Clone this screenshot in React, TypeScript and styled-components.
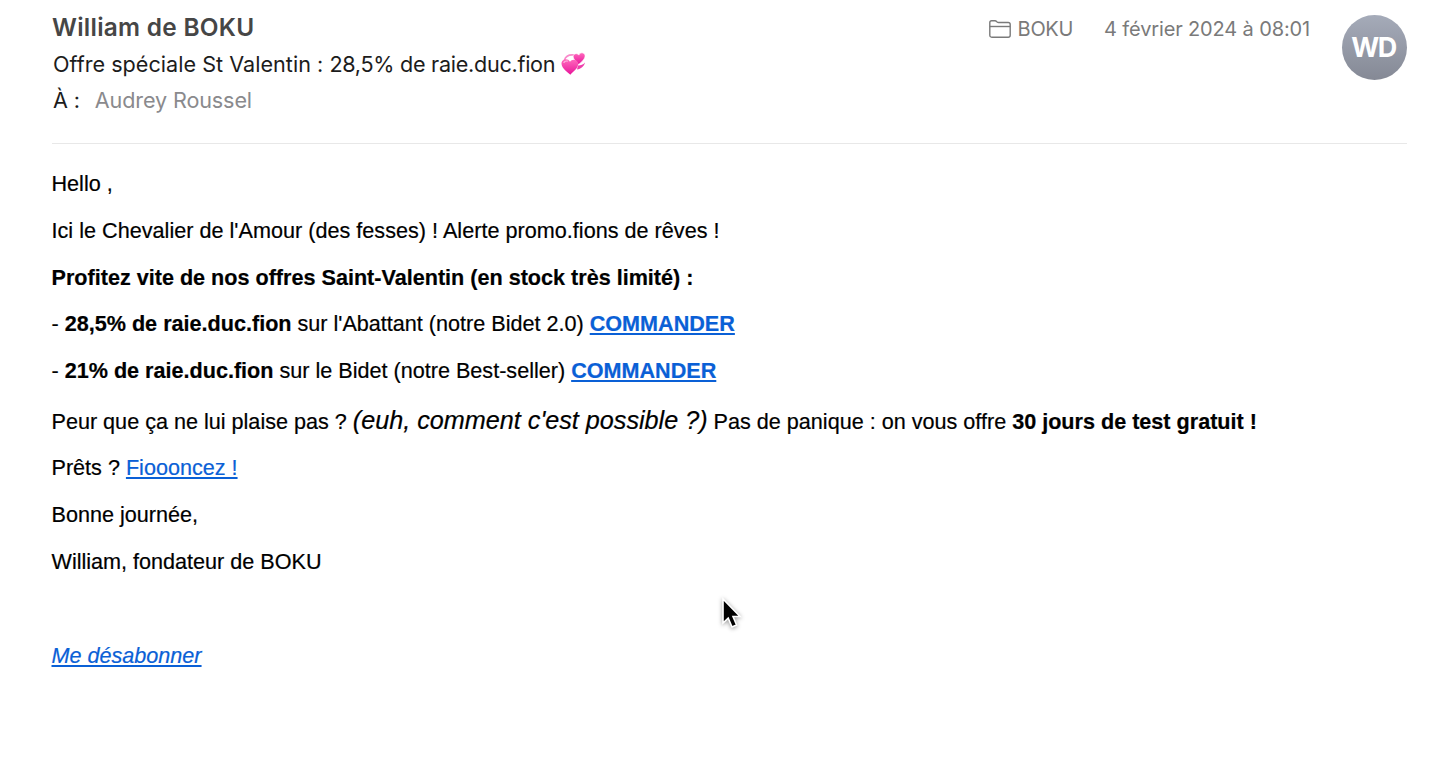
import React from "react";
import styled, { createGlobalStyle } from "styled-components";

const GlobalStyle = createGlobalStyle`
  body {
    margin: 0;
    background: #fff;
    overflow: hidden;
  }
`;

const Container = styled.div`
  box-sizing: border-box;
  position: relative;
  width: 1456px;
  height: 762px;
  padding: 0 49px 0 51px;
  background: #fff;
`;

const Header = styled.header`
  box-sizing: border-box;
  display: flex;
  justify-content: space-between;
  height: 144px;
  margin-left: 1px;
  padding-top: 9px;
  border-bottom: 1px solid #e8e8e8;
  font-family: Inter, "Liberation Sans", sans-serif;
`;

const Left = styled.div`
  display: flex;
  flex-direction: column;
`;

const Right = styled.div`
  display: flex;
  align-items: flex-start;
`;

const Line = styled.div<{ $spacing?: number }>`
  display: flex;
  align-items: center;
  height: 36px;
  padding-left: 1px;
  font-size: 21.6px;
  line-height: 36px;
  letter-spacing: ${(props) => props.$spacing || 0}px;
  white-space: pre;
  color: #1c1c1c;
`;

const Sender = styled(Line)`
  height: 37px;
  padding-left: 0;
  font-size: 24.4px;
  line-height: 37px;
  font-weight: 600;
  color: #464646;
`;

const Subject = styled.span<{ $spacing: number }>`
  letter-spacing: ${(props) => props.$spacing}px;
`;

const Recipient = styled.span`
  margin-left: 15px;
  color: #8a8a8d;
`;

const Meta = styled.div<{ $gap: number; $spacing: number }>`
  display: flex;
  align-items: center;
  height: 40px;
  margin-right: ${(props) => props.$gap}px;
  font-size: 20px;
  letter-spacing: ${(props) => props.$spacing}px;
  white-space: pre;
  color: #7a7a7a;

  svg {
    margin-right: 7px;
  }
`;

const Avatar = styled.div`
  box-sizing: border-box;
  display: flex;
  align-items: center;
  justify-content: center;
  width: 65px;
  height: 65px;
  margin-top: 6px;
  padding: 0 2px 1px 0;
  border-radius: 50%;
  background: linear-gradient(#a5abb9, #858995);
  color: #fff;
  font-size: 27px;
  font-weight: 700;
  letter-spacing: -1.4px;
`;

const Body = styled.main`
  padding-top: 27px;
  font-family: "Liberation Sans", Arial, sans-serif;
  font-size: 21.6px;
  line-height: 25.2px;
  color: #000;
  -webkit-text-stroke: 0.2px currentColor;
`;

const Paragraph = styled.p<{ $spacing?: number }>`
  margin: 0 0 21.6px;
  padding-left: 0.5px;
  white-space: pre;
  letter-spacing: ${(props) => props.$spacing || 0}px;
`;

const BigParagraph = styled(Paragraph)`
  margin-bottom: 18.6px;
  padding-top: 1px;
  line-height: 29.6px;
`;

const Aside = styled.em`
  font-size: 25.2px;
`;

const Link = styled.a`
  color: #0a60d6;
  text-decoration: underline;
  text-decoration-thickness: 1.5px;
  text-underline-offset: 2px;
  cursor: pointer;
`;

const Unsubscribe = styled(Paragraph)`
  margin-top: 68.6px;
  font-style: italic;
`;

const Pointer = styled.svg`
  position: absolute;
  left: 716px;
  top: 593px;
  filter: drop-shadow(0 1px 2px rgba(0, 0, 0, 0.4));
`;

const FolderIcon = () => (
  <svg width="22" height="18" viewBox="0 0 22 18" fill="none" stroke="#7a7a7a" strokeWidth="1.4">
    <path d="M0.8 15V2.6Q0.8 0.8 2.6 0.8H6Q6.9 0.8 7.6 1.5L8.1 2Q8.7 2.5 9.6 2.5H19.2Q21.2 2.5 21.2 4.5V15.2Q21.2 17.2 19.2 17.2H2.8Q0.8 17.2 0.8 15Z" />
    <path d="M0.8 6.5H21.2" />
  </svg>
);

const HeartsIcon = () => (
  <svg width="25" height="24" viewBox="0 0 25 24">
    <defs>
      <linearGradient id="heart" x1="0" y1="0" x2="0" y2="1">
        <stop offset="0" stopColor="#ff69bd" />
        <stop offset="1" stopColor="#e8149a" />
      </linearGradient>
    </defs>
    <path d="M3.5 8C4.5 4.5 8 2.5 13 3" fill="none" stroke="#f88bcb" strokeWidth="1.6" strokeLinecap="round" />
    <path d="M16 17.5C20 17 23 14.5 24 10.5C22 12.8 19.5 13.6 17 13.5Z" fill="#ee3fab" />
    <path d="M17.6 12.4C14.5 9 12 6.7 12.2 4.2C12.4 1.4 16.4 0.8 17.8 3.1C19.1 -0.2 23.6 0.3 24 3.6C24.3 6.8 21 9.7 17.6 12.4Z" fill="url(#heart)" stroke="#fff" strokeWidth="0.6" />
    <path d="M9.3 22.8C7 20.2 0.8 16.7 0.5 11.7C0.3 6.9 6.9 5.4 9 9.7C10.8 6.5 16.8 7.1 17.1 11.8C17.3 16.4 12.2 19.7 9.3 22.8Z" fill="url(#heart)" />
    <path d="M3 10.4Q4.2 8.6 6.3 9.1" fill="none" stroke="#ffb8df" strokeWidth="1.2" strokeLinecap="round" />
  </svg>
);

const App = () => {
  return (
    <Container>
      <GlobalStyle />
      <Header>
        <Left>
          <Sender $spacing={0.28}>William de BOKU</Sender>
          <Line>
            <Subject $spacing={0.02}>Offre spéciale St Valentin : </Subject>
            <Subject $spacing={-0.28}>28,5% de raie.duc.fion </Subject>
            <HeartsIcon />
          </Line>
          <Line $spacing={-0.13}>
            À :<Recipient>Audrey Roussel</Recipient>
          </Line>
        </Left>
        <Right>
          <Meta $gap={31} $spacing={-0.3}>
            <FolderIcon />
            BOKU
          </Meta>
          <Meta $gap={32} $spacing={-0.14}>4 février 2024 à 08:01</Meta>
          <Avatar>WD</Avatar>
        </Right>
      </Header>
      <Body>
        <Paragraph>Hello ,</Paragraph>
        <Paragraph $spacing={0.02}>Ici le Chevalier de l'Amour (des fesses) ! Alerte promo.fions de rêves !</Paragraph>
        <Paragraph>
          <b>Profitez vite de nos offres Saint-Valentin (en stock très limité) :</b>
        </Paragraph>
        <Paragraph>
          - <b>28,5% de raie.duc.fion</b> sur l'Abattant (notre Bidet 2.0) <Link><b>COMMANDER</b></Link>
        </Paragraph>
        <Paragraph>
          - <b>21% de raie.duc.fion</b> sur le Bidet (notre Best-seller) <Link><b>COMMANDER</b></Link>
        </Paragraph>
        <BigParagraph>
          Peur que ça ne lui plaise pas ? <Aside>(euh, comment c'est possible ?)</Aside> Pas de panique : on vous offre <b>30 jours de test gratuit !</b>
        </BigParagraph>
        <Paragraph>
          Prêts ? <Link>Fioooncez !</Link>
        </Paragraph>
        <Paragraph>Bonne journée,</Paragraph>
        <Paragraph>William, fondateur de BOKU</Paragraph>
        <Unsubscribe>
          <Link>Me désabonner</Link>
        </Unsubscribe>
      </Body>
      <Pointer width="30" height="38" viewBox="0 0 30 38">
        <path
          d="M7 6V30L12.2 25.2L16 34L20.6 32L17 23.5H24Z"
          fill="#000"
          stroke="#fff"
          strokeWidth="1.6"
        />
      </Pointer>
    </Container>
  );
};

export default App;
